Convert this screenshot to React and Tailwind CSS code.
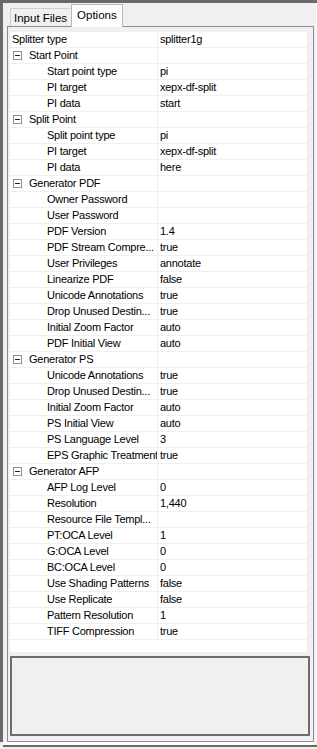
const ROWS = [
  { label: 'Splitter type', value: 'splitter1g', level: 0 },
  { label: 'Start Point', group: true },
  { label: 'Start point type', value: 'pi' },
  { label: 'PI target', value: 'xepx-df-split' },
  { label: 'PI data', value: 'start' },
  { label: 'Split Point', group: true },
  { label: 'Split point type', value: 'pi' },
  { label: 'PI target', value: 'xepx-df-split' },
  { label: 'PI data', value: 'here' },
  { label: 'Generator PDF', group: true },
  { label: 'Owner Password', value: '' },
  { label: 'User Password', value: '' },
  { label: 'PDF Version', value: '1.4' },
  { label: 'PDF Stream Compre...', value: 'true' },
  { label: 'User Privileges', value: 'annotate' },
  { label: 'Linearize PDF', value: 'false' },
  { label: 'Unicode Annotations', value: 'true' },
  { label: 'Drop Unused Destin...', value: 'true' },
  { label: 'Initial Zoom Factor', value: 'auto' },
  { label: 'PDF Initial View', value: 'auto' },
  { label: 'Generator PS', group: true },
  { label: 'Unicode Annotations', value: 'true' },
  { label: 'Drop Unused Destin...', value: 'true' },
  { label: 'Initial Zoom Factor', value: 'auto' },
  { label: 'PS Initial View', value: 'auto' },
  { label: 'PS Language Level', value: '3' },
  { label: 'EPS Graphic Treatment', value: 'true' },
  { label: 'Generator AFP', group: true },
  { label: 'AFP Log Level', value: '0' },
  { label: 'Resolution', value: '1,440' },
  { label: 'Resource File Templ...', value: '' },
  { label: 'PT:OCA Level', value: '1' },
  { label: 'G:OCA Level', value: '0' },
  { label: 'BC:OCA Level', value: '0' },
  { label: 'Use Shading Patterns', value: 'false' },
  { label: 'Use Replicate', value: 'false' },
  { label: 'Pattern Resolution', value: '1' },
  { label: 'TIFF Compression', value: 'true' },
]

export default function App() {
  return (
    <div className="w-[317px] h-[749px] bg-[#f0f0f0] flex flex-col text-[11px] tracking-[-0.25px] text-black overflow-hidden" style={{ fontFamily: '"Liberation Sans", Arial, sans-serif' }}>
      <div className="h-[3px] bg-[#6a6a6a] shrink-0" />
      <div className="flex h-[739px] shrink-0">
        <div className="w-[3px] bg-[#6a6a6a]" />
        <div className="flex-1 flex flex-col pl-[4px] pr-[2px]">
          <div className="h-[23px] flex items-end pl-[3px] shrink-0">
            <Tab label="Input Files" />
            <Tab label="Options" active />
          </div>
          <div className="flex-1 border border-[#8b8b9c] flex flex-col px-[2px] pt-[5px] pb-[5px]">
            <div className="flex flex-col">
              {ROWS.map((row, i) => (
                <GridRow key={i} row={row} />
              ))}
              <div className="h-[12px] bg-white mr-[4px]" />
            </div>
            <div className="mt-[4px] h-[80px] border-2 border-[#6e6e6e] bg-[#f0f0f0] mr-[1px]" />
          </div>
        </div>
        <div className="w-px bg-white" />
      </div>
      <div className="h-[3px] mx-[3px] bg-white shrink-0" />
      <div className="h-[2px] ml-[3px] bg-[#6a6a6a] shrink-0" />
    </div>
  )
}

function Tab({ label, active = false }) {
  if (active) {
    return (
      <div className="relative z-10 -mb-px h-[23px] px-[5px] pt-[2px] border border-b-0 border-[#b9b9b9] bg-white flex items-start">
        <span className="leading-[16px] text-[11.5px] tracking-normal">{label}</span>
      </div>
    )
  }
  return (
    <div className="h-[18px] pl-[3px] pr-[4px] border border-b-0 border-r-0 border-[#d0d0d0] bg-[#f0f0f0] flex items-center">
      <span className="text-[11.5px] leading-[16px] tracking-normal">{label}</span>
    </div>
  )
}

function GridRow({ row }) {
  return (
    <div className="flex h-[16px] border-b border-[#f0f0f0] bg-white mr-[4px]">
      <div className="w-[148px] shrink-0 border-r border-[#f0f0f0] flex items-center overflow-hidden whitespace-nowrap">
        {row.group ? (
          <>
            <span className="ml-[3px] w-[9px] h-[9px] border border-[#8f8f8f] flex items-center justify-center bg-white">
              <span className="w-[5px] h-px bg-[#222]" />
            </span>
            <span className="ml-[7px]">{row.label}</span>
          </>
        ) : (
          <span className={row.level === 0 ? 'ml-[2px]' : 'ml-[37px]'}>{row.label}</span>
        )}
      </div>
      <div className="flex-1 flex items-center pl-[2px] whitespace-nowrap overflow-hidden">
        {row.value}
      </div>
    </div>
  )
}
